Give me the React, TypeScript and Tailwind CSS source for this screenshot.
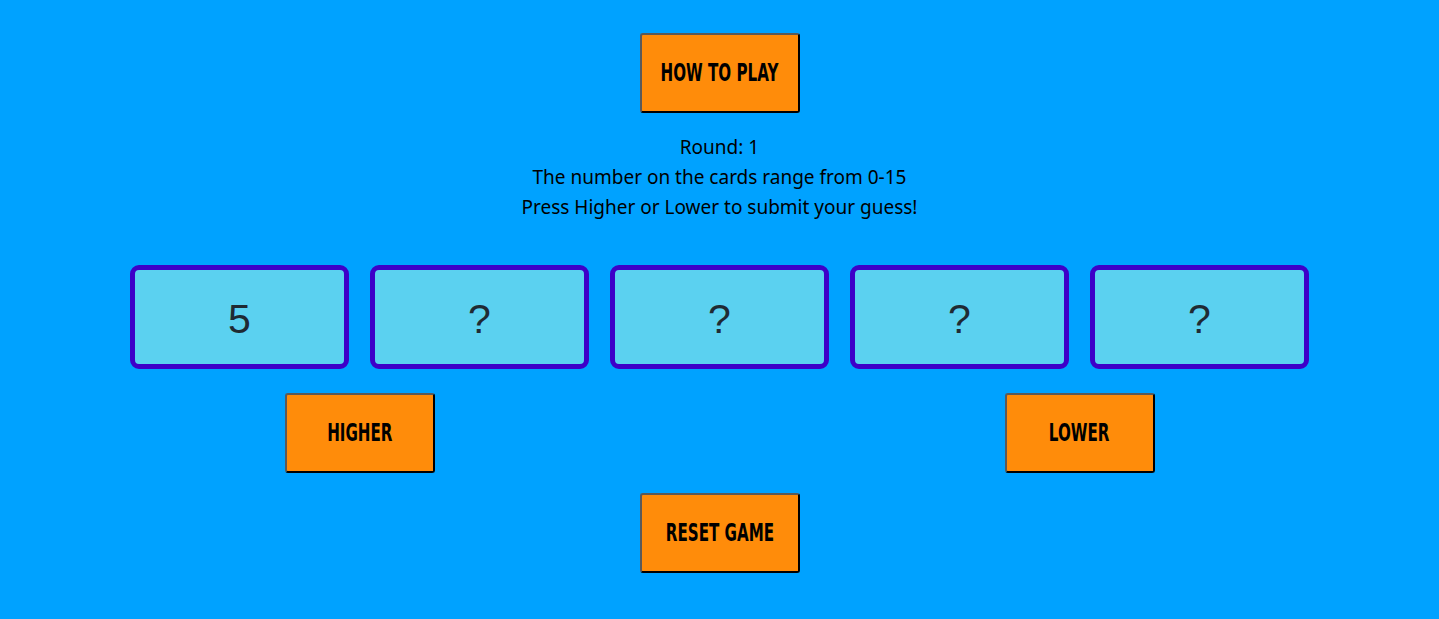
import React from 'react';

const cards = ['5', '?', '?', '?', '?'];

const GameButton: React.FC<{ label: string; className?: string }> = ({ label, className = '' }) => (
  <button
    className={`h-[80px] rounded-[3px] border-2 border-t-[#5a5a5a] border-l-[#5a5a5a] border-b-black border-r-black bg-[#ff8c0a] text-black flex items-center justify-center ${className}`}
  >
    <span className="inline-block scale-x-[0.63] whitespace-nowrap uppercase font-bold text-[24px] leading-none [font-family:'DejaVu_Sans',sans-serif]">
      {label}
    </span>
  </button>
);

export default function App() {
  return (
    <div className="min-h-[619px] w-full bg-[#00a2ff] flex flex-col items-center pt-[33px]">
      <GameButton label="How to play" className="w-[160px]" />

      <div className="mt-[19px] text-center text-black text-[19px] leading-[30px] [font-family:'Noto_Sans',sans-serif]">
        <p>Round: 1</p>
        <p>The number on the cards range from 0-15</p>
        <p>Press Higher or Lower to submit your guess!</p>
      </div>

      <div className="mt-[43px] flex gap-[21px]">
        {cards.map((c, i) => (
          <div
            key={i}
            className="w-[219px] h-[104px] pt-[5px] rounded-[9px] border-[5px] border-[#3d00c8] bg-[#5bd1f0] flex items-center justify-center text-[41px] text-[#1f2a33] [font-family:'Liberation_Sans',Arial,sans-serif]"
          >
            {c}
          </div>
        ))}
      </div>

      <div className="mt-[24px] w-[870px] flex justify-between">
        <GameButton label="Higher" className="w-[150px]" />
        <GameButton label="Lower" className="w-[150px]" />
      </div>

      <GameButton label="Reset game" className="mt-[20px] w-[160px]" />
    </div>
  );
}
